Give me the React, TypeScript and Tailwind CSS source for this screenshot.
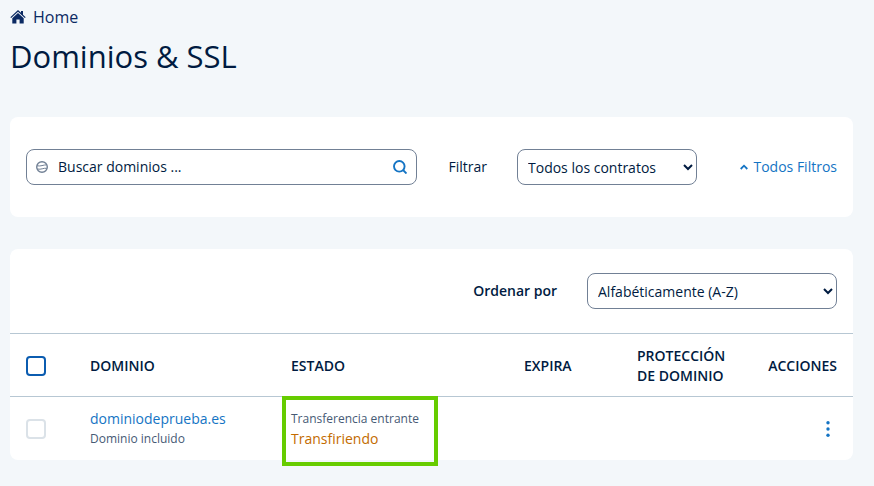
import { useState } from 'react';

const dominios = [
  { nombre: 'dominiodeprueba.es', detalle: 'Dominio incluido', tipo: 'Transferencia entrante', estado: 'Transfiriendo' },
];

function HomeIcon() {
  return (
    <svg viewBox="0 0 16 16" className="h-4 w-4" fill="#0b2a63" aria-hidden="true">
      <path d="M8 1 .3 8.200l.9.9L8 2.800l6.800 6.300.9-.9L13 5.700V2h-2v1.800z" />
      <path d="M8 4 2.300 9.300V14.500H6.400v-4h3.200v4h4.100V9.300z" />
    </svg>
  );
}

function GlobeIcon() {
  return (
    <svg viewBox="0 0 12 12" className="h-3 w-3" fill="none" stroke="#718095" aria-hidden="true">
      <circle cx="6" cy="6" r="5.300" strokeWidth="1.400" />
      <path d="M1 4.800c2 .3 3.500.2 5-.2s3-.8 4.500-.7M1.200 8c2 .4 3.600.2 5-.2s3-.7 4.600-.5" strokeWidth="1" />
    </svg>
  );
}

function SearchIcon() {
  return (
    <svg viewBox="0 0 14 14" className="h-3.5 w-3.5" fill="none" stroke="#1474c4" strokeWidth="1.900" aria-hidden="true">
      <circle cx="6.300" cy="6.300" r="5.300" />
      <path d="m10 10 3.500 3.500" />
    </svg>
  );
}

function ChevronIcon() {
  return (
    <svg viewBox="0 0 8 6" className="h-1.5 w-2" fill="none" stroke="#1474c4" strokeWidth="1.800" aria-hidden="true">
      <path d="M.7 5 4 1.700 7.300 5" />
    </svg>
  );
}

export default function App() {
  const [busqueda, setBusqueda] = useState('');
  const [marcado, setMarcado] = useState(false);

  return (
    <div className="min-h-screen bg-[#f3f7fa] pt-[5px] pr-[21px] pb-5 pl-[10px] font-['Open_Sans',sans-serif] text-sm text-[#001b41]">
      <nav>
        <a href="#" className="inline-flex items-center gap-[7px] text-base text-[#0b2a63]">
          <HomeIcon />
          Home
        </a>
      </nav>
      <h1 className="mt-[7px] text-[31px] leading-[38px]">Dominios &amp; SSL</h1>

      {/* FILTROS */}
      <section className="mt-[42px] flex items-center rounded-lg bg-white px-4 py-8">
        <div className="flex h-9 flex-1 items-center rounded-lg border border-[#718095] px-[9px]">
          <GlobeIcon />
          <input
            type="text"
            aria-label="Buscar dominios"
            placeholder="Buscar dominios ..."
            value={busqueda}
            onChange={(e) => setBusqueda(e.target.value)}
            className="ml-[10px] min-w-0 flex-1 outline-none placeholder:text-[#001b41]"
          />
          <button type="button" aria-label="Buscar"><SearchIcon /></button>
        </div>
        <label htmlFor="contrato" className="mr-[30px] ml-[31px]">Filtrar</label>
        <select id="contrato" className="h-9 w-[180px] rounded-lg border border-[#718095] bg-white px-[6px]">
          <option>Todos los contratos</option>
        </select>
        <a href="#" className="flex w-[140px] items-center justify-end gap-[5px] text-[#1474c4]">
          <ChevronIcon />
          Todos Filtros
        </a>
      </section>

      {/* LISTADO */}
      <section className="mt-8 rounded-lg bg-white">
        <div className="flex items-center justify-end px-4 py-6">
          <label htmlFor="orden" className="mr-[30px] font-semibold">Ordenar por</label>
          <select id="orden" className="h-9 w-[250px] rounded-lg border border-[#718095] bg-white px-[6px]">
            <option>Alfabéticamente (A-Z)</option>
          </select>
        </div>

        <table className="w-full table-fixed text-left">
          <thead>
            <tr className="h-[63px] border-y border-[#b7c7d3] *:pt-0.5">
              <th className="w-20 pl-4">
                <input
                  type="checkbox"
                  aria-label="Seleccionar todos"
                  checked={marcado}
                  onChange={() => setMarcado(!marcado)}
                  className="block h-5 w-5 appearance-none rounded border-2 border-[#0b5cb0] checked:bg-[#0b5cb0]"
                />
              </th>
              <th className="font-semibold">DOMINIO</th>
              <th className="w-[233px] font-semibold">ESTADO</th>
              <th className="w-[113px] font-semibold">EXPIRA</th>
              <th className="w-[113px] font-semibold">PROTECCIÓN<br />DE DOMINIO</th>
              <th className="w-[103px] pr-4 text-right font-semibold">ACCIONES</th>
            </tr>
          </thead>
          <tbody>
            {dominios.map((d) => (
              <tr key={d.nombre} className="h-[63px] *:pt-0.5">
                <td className="pl-4">
                  <input
                    type="checkbox"
                    disabled
                    aria-label={d.nombre}
                    className="block h-5 w-5 appearance-none rounded border-2 border-[#dbe2e8]"
                  />
                </td>
                <td>
                  <a href="#" className="block text-[#1474c4]">{d.nombre}</a>
                  <p className="text-xs leading-5 text-[#465a75]">{d.detalle}</p>
                </td>
                <td className="relative">
                  <p className="text-xs leading-5 text-[#465a75]">{d.tipo}</p>
                  <p className="text-[#c36b00]">{d.estado}</p>
                  <div className="absolute -top-px -left-[9px] h-[70px] w-[156px] border-4 border-[#66cc00]" />
                </td>
                <td />
                <td />
                <td className="pr-4">
                  <button type="button" aria-label="Acciones" className="ml-auto flex w-[18px] justify-center">
                    <svg viewBox="0 0 4 16" className="h-4 w-1" fill="#1474c4">
                      <circle cx="2" cy="1.700" r="1.700" />
                      <circle cx="2" cy="8" r="1.700" />
                      <circle cx="2" cy="14.300" r="1.700" />
                    </svg>
                  </button>
                </td>
              </tr>
            ))}
          </tbody>
        </table>
      </section>
    </div>
  );
}
